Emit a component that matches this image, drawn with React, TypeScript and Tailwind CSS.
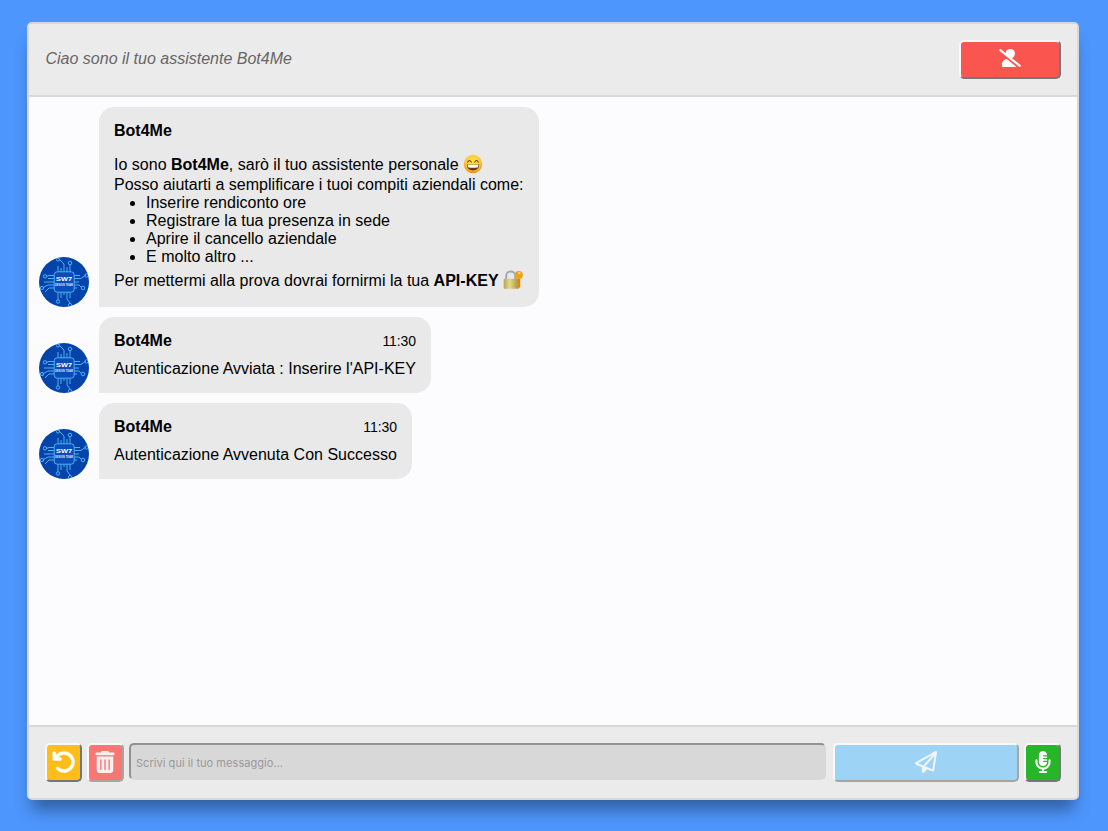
import type { ReactNode } from "react";
import { FaArrowRotateLeft, FaTrashCan, FaRegPaperPlane, FaMicrophoneLines } from "react-icons/fa6";

function Avatar() {
  return (
    <svg viewBox="0 0 50 50" className="size-[50px] shrink-0 rounded-full" fill="none">
      <rect width="50" height="50" fill="#0443aa" />
      <g stroke="#4fb0f2" strokeWidth="1">
        <path d="M19 15V9M22 15V11M25 15V7L19 1M28 15V10M31 15V7.5M19 35V43M22 35V41M25 35V38M28 35V42L31 46M31 35V41" />
        <path d="M15 18.5H10L7.5 19.5M15 21.5H9M15 25H5M15 28H9L3.5 31M15 31H10L6 35M35 18.5H41M35 21.5H42L47 18M35 25H40M35 28H40L42.5 30.5M35 31H38" />
        <rect x="15.2" y="14.8" width="20" height="20.4" rx="3" fill="#0a4db8" />
        <circle cx="31" cy="6" r="1.8" /><circle cx="19" cy="2.5" r="1.6" />
        <circle cx="6" cy="19.3" r="1.7" /><circle cx="3" cy="31" r="1.7" />
        <circle cx="47.5" cy="18.5" r="1.7" /><circle cx="44" cy="31" r="1.8" />
        <circle cx="19" cy="44.5" r="1.7" /><circle cx="31" cy="48" r="1.6" />
      </g>
      <text x="25" y="23.7" textAnchor="middle" textLength="16" lengthAdjust="spacingAndGlyphs" className="fill-white font-['Liberation_Sans',sans-serif] text-[6px] font-bold">SW7</text>
      <text x="25" y="28.6" textAnchor="middle" textLength="18" lengthAdjust="spacingAndGlyphs" className="fill-[#d5e9ff] font-['Liberation_Sans',sans-serif] text-[2.8px] font-bold">DESIGN TEAM</text>
    </svg>
  );
}

function UserOff() {
  return (
    <svg viewBox="0 0 22 18" className="mb-1 h-[18px] w-[22px]" fill="none">
      <circle cx="11.3" cy="4.6" r="4.7" fill="#fff" />
      <path d="M3 17V15.4C3 12.4 5 10 8.2 10H12.5L17.5 18H4Q3 18 3 17Z" fill="#fff" />
      <path d="M-.2 2.5L19.6 18.4" stroke="#fb554f" strokeWidth="1.8" />
      <path d="M1.3 1.2L20.8 16.8" stroke="#fff" strokeWidth="2.2" strokeLinecap="round" />
    </svg>
  );
}

function Grin() {
  return (
    <svg viewBox="0 0 20 20" className="inline-block h-5 w-5 -translate-y-px align-[-5px]">
      <defs>
        <radialGradient id="face" cx="50%" cy="35%" r="65%">
          <stop offset="0" stopColor="#ffe75a" />
          <stop offset=".65" stopColor="#fdc52f" />
          <stop offset="1" stopColor="#ed8b1b" />
        </radialGradient>
      </defs>
      <circle cx="10" cy="10" r="9.2" fill="url(#face)" />
      <path d="M4.7 8.1Q6.6 5 8.3 8.1M11.7 8.1Q13.4 5 15.3 8.1" fill="none" stroke="#66401b" strokeWidth="1.1" strokeLinecap="round" />
      <path d="M3.7 10.2Q10 11.3 16.3 10.2Q15.7 16.4 10 16.4Q4.3 16.4 3.7 10.2Z" fill="#6a351a" />
      <path d="M4.4 10.6Q10 11.6 15.6 10.6L14.9 13.2Q10 14.5 5.1 13.2Z" fill="#fff" />
    </svg>
  );
}

function LockKey() {
  return (
    <svg viewBox="0 0 20 20" className="inline-block h-5 w-5 -translate-y-px align-[-5px]">
      <defs>
        <linearGradient id="brass" x1="0" y1="0" x2="1" y2="0">
          <stop offset="0" stopColor="#b4a657" />
          <stop offset=".4" stopColor="#e5d98b" />
          <stop offset="1" stopColor="#a3923e" />
        </linearGradient>
      </defs>
      <path d="M3.2 10V5.8C3.2 0 12.2 0 12.2 5.8V10" fill="none" stroke="#9aabb7" strokeWidth="1.9" />
      <rect x=".7" y="8.8" width="15" height="10" rx="1" fill="url(#brass)" />
      <path d="M14.7 7.5H17.3V16.8L15.8 18.7L14.4 17V15.8L13.4 14.9L14.4 14V12.8L13.4 12L14.7 11Z" fill="#e8960f" />
      <circle cx="15.8" cy="5" r="4.1" fill="#f0a21b" />
      <circle cx="16.4" cy="3.1" r="1" fill="#f6efe1" />
      <path d="M16.1 9V17" stroke="#b96e08" strokeWidth=".6" />
    </svg>
  );
}

function Message({ time, children }: { time?: string; children: ReactNode }) {
  return (
    <div className="flex items-end gap-2.5">
      <Avatar />
      <div className="rounded-[15px] rounded-bl-none bg-[#e9e9e9] p-[15px] leading-[18px] tracking-[0.008px]">
        <div className="flex items-center justify-between">
          <b className="leading-[18px]">Bot4Me</b>
          {time && <span className="text-[14px] tracking-[-0.1px]">{time}</span>}
        </div>
        {children}
      </div>
    </div>
  );
}

const raised = "flex h-[39px] shrink-0 items-center justify-center rounded-[5px] border-2 border-t-[#f8f8f8] border-l-[#f8f8f8] text-white";
const strong = "border-r-[#777] border-b-[#777]";
const faded = "border-r-[#a5a5a5] border-b-[#a5a5a5]";

export default function App() {
  return (
    <div className="h-[831px] bg-[#4d96fd] px-[27px] pt-[22px] font-['Liberation_Sans',Arial,sans-serif] text-[16px] text-black">
      <main className="flex h-[778px] w-[1052px] flex-col overflow-hidden rounded-[5px] border-2 border-[#d8d8d8] bg-[#fcfcff] shadow-[0_15px_15px_-5px_rgba(0,0,0,0.36)]">
        <header className="flex h-[73px] shrink-0 items-center justify-between border-b-2 border-[#d8d8d8] bg-[#ebebeb] pr-4 pl-[16.5px]">
          <span className="mb-px text-[#666] italic">Ciao sono il tuo assistente Bot4Me</span>
          <button aria-label="Disconnetti" className={`${raised} ${strong} w-[102px] bg-[#fb554f]`}>
            <UserOff />
          </button>
        </header>
        <section className="flex min-h-0 flex-1 flex-col gap-2.5 p-2.5">
          <Message>
            <div className="mt-[15px] mb-px whitespace-nowrap">
              <div className="h-[21px] leading-5">Io sono <b>Bot4Me</b>, sarò il tuo assistente personale <Grin /></div>
              <div>Posso aiutarti a semplificare i tuoi compiti aziendali come:</div>
              <ul className="list-disc pl-8">
                <li>Inserire rendiconto ore</li>
                <li>Registrare la tua presenza in sede</li>
                <li>Aprire il cancello aziendale</li>
                <li>E molto altro ...</li>
              </ul>
              <div className="mt-[5px] h-5 leading-5">Per mettermi alla prova dovrai fornirmi la tua <b>API-KEY</b> <LockKey /></div>
            </div>
          </Message>
          <Message time="11:30"><p className="mt-2.5">Autenticazione Avviata : Inserire l'API-KEY</p></Message>
          <Message time="11:30"><p className="mt-2.5">Autenticazione Avvenuta Con Successo</p></Message>
        </section>
        <footer className="flex h-[73px] shrink-0 items-center border-t-2 border-[#d8d8d8] bg-[#ebebeb] px-4">
          <button aria-label="Annulla" className={`${raised} ${strong} mr-[5px] w-[37px] bg-[#febd19]`}><FaArrowRotateLeft className="mb-0.5 size-6 stroke-current stroke-[10px]" /></button>
          <button aria-label="Elimina" className={`${raised} ${faded} mr-[5px] w-[37px] bg-[#f77775]`}><FaTrashCan className="mr-px mb-0.5 size-[22px] text-[#f7f0f0]" /></button>
          <input disabled placeholder="Scrivi qui il tuo messaggio..." className="mb-0.5 h-[37px] w-[697px] rounded-[5px] border-2 border-t-[#929292] border-r-[#d8d8d8] border-b-[#d8d8d8] border-l-[#929292] bg-[#d8d8d8] px-[5px] pt-0.5 font-['Inter',sans-serif] text-[11px] tracking-[0.05px] placeholder:text-[#999]" />
          <button aria-label="Invia" className={`${raised} ${faded} ml-[7px] w-[186px] bg-[#9dd3f5]`}><FaRegPaperPlane className="mb-0.5 size-[22px] text-[#f0f5f8]" /></button>
          <button aria-label="Microfono" className={`${raised} ${strong} ml-[5px] w-[37px] bg-[#28b529]`}><FaMicrophoneLines className="mb-0.5 size-[22px]" /></button>
        </footer>
      </main>
    </div>
  );
}
